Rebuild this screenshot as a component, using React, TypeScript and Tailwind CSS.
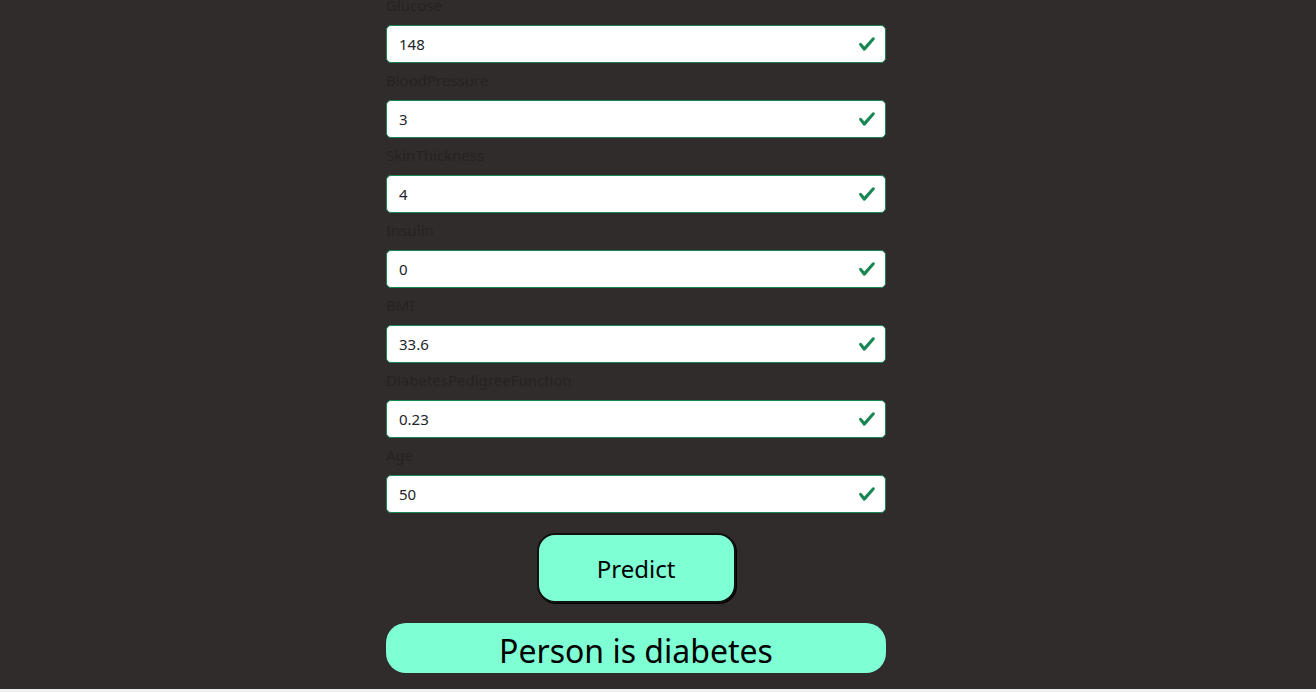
const fields = [
  { label: 'Glucose', value: '148' },
  { label: 'BloodPressure', value: '3' },
  { label: 'SkinThickness', value: '4' },
  { label: 'Insulin', value: '0' },
  { label: 'BMI', value: '33.6' },
  { label: 'DiabetesPedigreeFunction', value: '0.23' },
  { label: 'Age', value: '50' },
]

function ValidIcon() {
  return (
    <svg viewBox="0 0 8 8" className="h-[18px] w-[18px]" fill="#198754">
      <path d="M2.3 6.73.6 4.53c-.4-1.04.46-1.4 1.1-.8l1.1 1.4 3.4-3.8c.6-.63 1.6-.27 1.2.7l-4 4.6c-.43.5-.8.4-1.1.1z" />
    </svg>
  )
}

export default function App() {
  return (
    <div className="h-[692px] overflow-hidden bg-[#f0f0f0] font-['Noto_Sans',sans-serif]">
      <div className="h-[689px] overflow-hidden bg-[#302c2b]">
        <div className="flex w-[1272px] justify-center">
          <div className="-mt-[7px] flex w-[500px] flex-col">
            {fields.map((f, i) => (
              <div key={f.label} className={i === 0 ? '' : 'mt-[5px]'}>
                <div className="mb-2 text-[15px] leading-6 text-[#262221]">{f.label}</div>
                <div className="flex h-[38px] items-center justify-between rounded-[5px] border border-[#198754] bg-white pl-3 pr-[9px]">
                  <span className="text-[15px] text-[#212529]">{f.value}</span>
                  <ValidIcon />
                </div>
              </div>
            ))}

            <div className="mt-5 flex justify-center">
              <button className="h-[70px] w-[199px] rounded-[18px] border-2 border-[#111] bg-[#7fffd4] pt-[2px] text-2xl text-black shadow-[1px_1px_0_#000]">
                Predict
              </button>
            </div>

            <div className="mt-5 flex h-[50px] items-center justify-center rounded-[20px] bg-[#7fffd4] pt-[5px] text-[32px] text-black">
              Person is diabetes
            </div>
          </div>
        </div>
      </div>
    </div>
  )
}
